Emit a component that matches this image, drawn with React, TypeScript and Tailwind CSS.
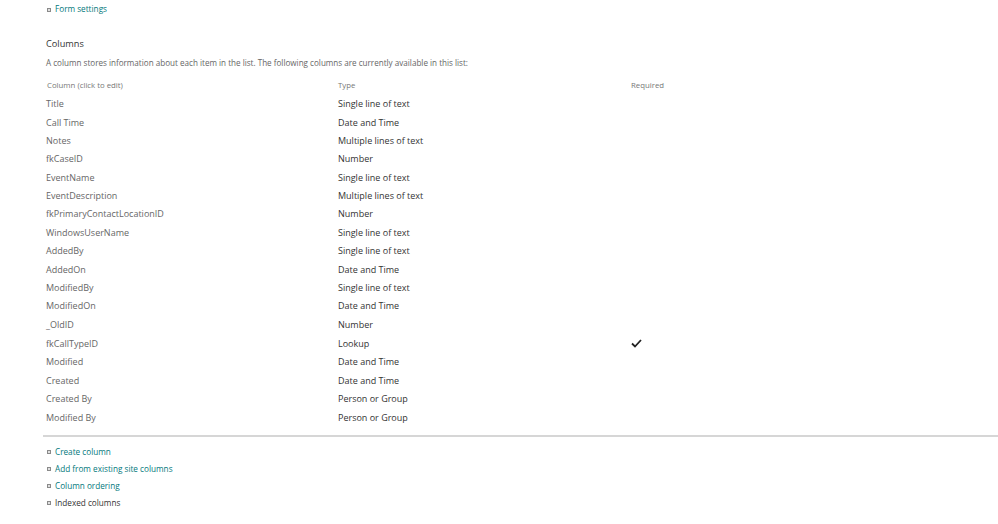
const columns: [string, string, boolean][] = [
  ['Title', 'Single line of text', false],
  ['Call Time', 'Date and Time', false],
  ['Notes', 'Multiple lines of text', false],
  ['fkCaseID', 'Number', false],
  ['EventName', 'Single line of text', false],
  ['EventDescription', 'Multiple lines of text', false],
  ['fkPrimaryContactLocationID', 'Number', false],
  ['WindowsUserName', 'Single line of text', false],
  ['AddedBy', 'Single line of text', false],
  ['AddedOn', 'Date and Time', false],
  ['ModifiedBy', 'Single line of text', false],
  ['ModifiedOn', 'Date and Time', false],
  ['_OldID', 'Number', false],
  ['fkCallTypeID', 'Lookup', true],
  ['Modified', 'Date and Time', false],
  ['Created', 'Date and Time', false],
  ['Created By', 'Person or Group', false],
  ['Modified By', 'Person or Group', false],
];

const links = ['Create column', 'Add from existing site columns', 'Column ordering', 'Indexed columns'];

function LinkItem({ label, dark }: { label: string; dark?: boolean }) {
  return (
    <div className="flex items-center h-[17px] text-[8.2px]">
      <span className="w-[4px] h-[4px] border border-[#8a8a8a] bg-[#e0e0e0] mr-[4px]" />
      <span className={dark ? 'text-[#333]' : 'text-[#03787c]'}>{label}</span>
    </div>
  );
}

export default function App() {
  return (
    <div className="w-[998px] h-[524px] bg-white overflow-hidden text-[9px]" style={{ fontFamily: '"Open Sans", sans-serif' }}>
      <div className="pl-[47px] pt-[1px]">
        <LinkItem label="Form settings" />
      </div>
      <div className="pl-[46px] pt-[19px]">
        <div className="text-[9.2px] text-[#333] h-[19px]">Columns</div>
        <div className="text-[8.1px] text-[#666] h-[20px] leading-[13px]">
          A column stores information about each item in the list. The following columns are currently available in this list:
        </div>
        <div className="flex text-[7.8px] text-[#777] h-[19px] items-center">
          <div className="w-[292px] pl-[1px]">Column (click to edit)</div>
          <div className="w-[293px]">Type</div>
          <div>Required</div>
        </div>
        {columns.map(([name, type, req]) => (
          <div key={name} className={`flex items-center ${req ? 'h-[19.6px]' : 'h-[18.35px]'}`}>
            <div className="w-[292px] text-[#666]">{name}</div>
            <div className="w-[293px] text-[#333]">{type}</div>
            <div className="text-[#222]">
              {req && (
                <svg width="11" height="9" viewBox="0 0 11 9">
                  <path d="M1 4.5 L4 7.5 L10 1" fill="none" stroke="#222" strokeWidth="1.8" />
                </svg>
              )}
            </div>
          </div>
        ))}
      </div>
      <div className="ml-[43px] mt-[9px] h-[2px] bg-[#d6d6d6]" />
      <div className="pl-[47px] pt-[6px]">
        {links.map((l, i) => (
          <LinkItem key={l} label={l} dark={i === 3} />
        ))}
      </div>
    </div>
  );
}
